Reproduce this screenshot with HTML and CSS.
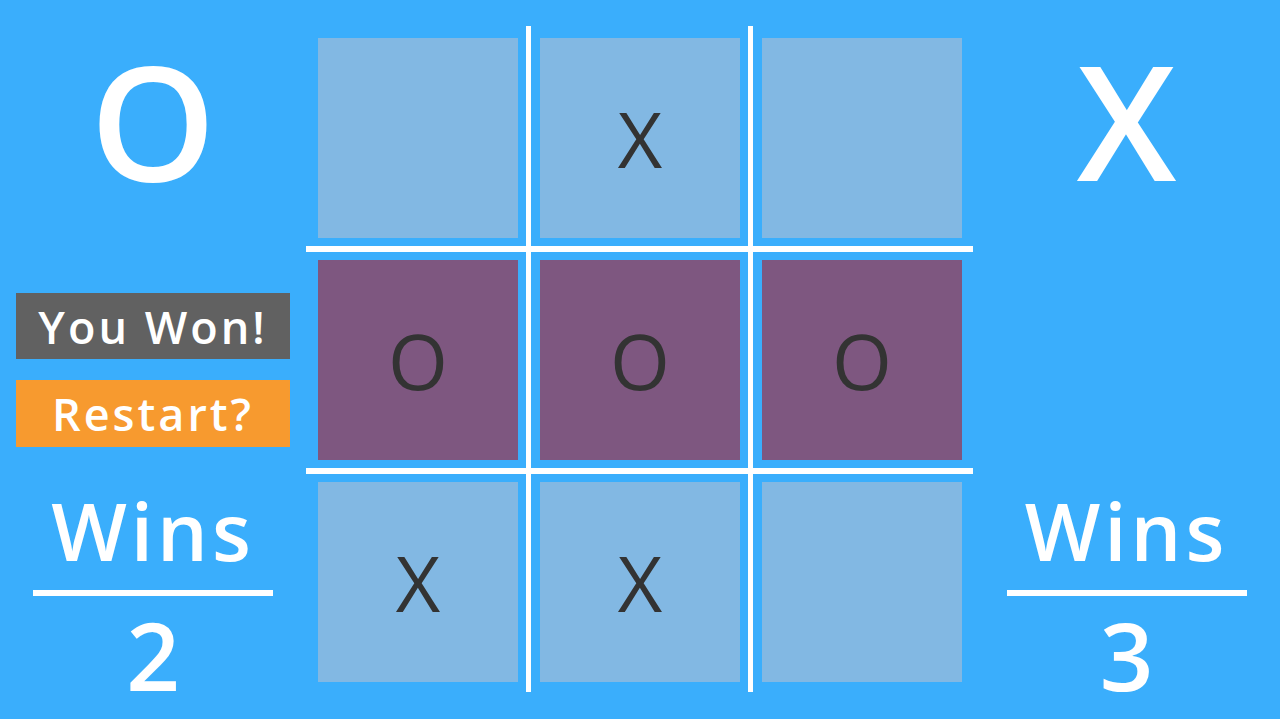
FILE: index.html
```html
<!DOCTYPE html>
<html lang="en">
<head>
    <meta charset="UTF-8">
    <meta name="viewport" content="width=device-width, initial-scale=1.0">
    <title>Tic Tac Toe</title>
    <link rel="stylesheet" href="styles.css">
</head>
<body>
    <div class="side">
        <div class="mark">O</div>
        <div class="status">
            <div class="banner banner-win">You Won!</div>
            <div class="banner banner-restart">Restart?</div>
        </div>
        <div class="score">
            <div class="score-label">Wins</div>
            <div class="score-rule"></div>
            <div class="score-value">2</div>
        </div>
    </div>

    <div class="board">
        <div class="cell"></div>
        <div class="cell">X</div>
        <div class="cell"></div>
        <div class="cell winning">O</div>
        <div class="cell winning">O</div>
        <div class="cell winning">O</div>
        <div class="cell">X</div>
        <div class="cell">X</div>
        <div class="cell"></div>

        <!-- the white grid strokes sit over the gaps -->
        <div class="line line-v line-v1"></div>
        <div class="line line-v line-v2"></div>
        <div class="line line-h line-h1"></div>
        <div class="line line-h line-h2"></div>
    </div>

    <div class="side">
        <div class="mark">X</div>
        <div class="status"></div>
        <div class="score">
            <div class="score-label">Wins</div>
            <div class="score-rule"></div>
            <div class="score-value">3</div>
        </div>
    </div>
</body>
</html>
```

FILE: styles.css
```css
:root {
    --sky: #3aaefc;
    --cell: #82b8e3;
    --cell-won: #7e5780;
    --ink: #333333;
    --banner-grey: #616161;
    --banner-orange: #f79a2f;
}

html, body {
    margin: 0;
    height: 100%;
}

body {
    font-family: 'Open Sans', 'Liberation Sans', sans-serif;
    background: var(--sky);
    color: white;
    display: flex;
    align-items: flex-start;
    overflow: hidden;
}

.side {
    width: 306px;
    flex: none;
    height: 719px;
    display: flex;
    flex-direction: column;
    align-items: center;
}

.side:last-child {
    width: 307px;
}

.mark {
    height: 238px;
    display: flex;
    align-items: center;
    justify-content: center;
    font-size: 160px;
    font-weight: 650;
    line-height: 1;
}

.status {
    width: 274px;
    height: 154px;
    margin-top: 55px;
    display: flex;
    flex-direction: column;
    gap: 21px;
}

.banner {
    height: 66px;
    display: flex;
    align-items: center;
    justify-content: center;
    font-size: 45px;
    font-weight: 650;
    letter-spacing: 3px;
}

.banner-win {
    background: var(--banner-grey);
}

.banner-restart {
    background: var(--banner-orange);
    height: 67px;
}

.score {
    margin-top: 43px;
    display: flex;
    flex-direction: column;
    align-items: center;
}

.score-label {
    font-size: 80px;
    font-weight: 650;
    line-height: 1;
    letter-spacing: 4px;
}

.score-rule {
    width: 240px;
    height: 6px;
    background: white;
    margin-top: 20px;
}

.score-value {
    font-size: 94px;
    font-weight: 650;
    line-height: 1;
    margin-top: 12px;
}

.board {
    position: relative;
    width: 667px;
    height: 666px;
    margin-top: 26px;
    flex: none;
    box-sizing: border-box;
    padding: 12px 10px 10px 12px;
    display: grid;
    grid-template-columns: repeat(3, 200px);
    grid-template-rows: repeat(3, 200px);
    column-gap: 22px;
    row-gap: 22px;
}

.cell {
    background: var(--cell);
    color: var(--ink);
    display: flex;
    align-items: center;
    justify-content: center;
    font-size: 77px;
    line-height: 1;
}

.cell.winning {
    background: var(--cell-won);
}

.line {
    position: absolute;
    background: white;
}

.line-v {
    top: 0;
    bottom: 0;
    width: 5px;
}

.line-v1 { left: 220px; }
.line-v2 { left: 442px; }

.line-h {
    left: 0;
    right: 0;
    height: 6px;
}

.line-h1 { top: 220px; }
.line-h2 { top: 442px; }
```
